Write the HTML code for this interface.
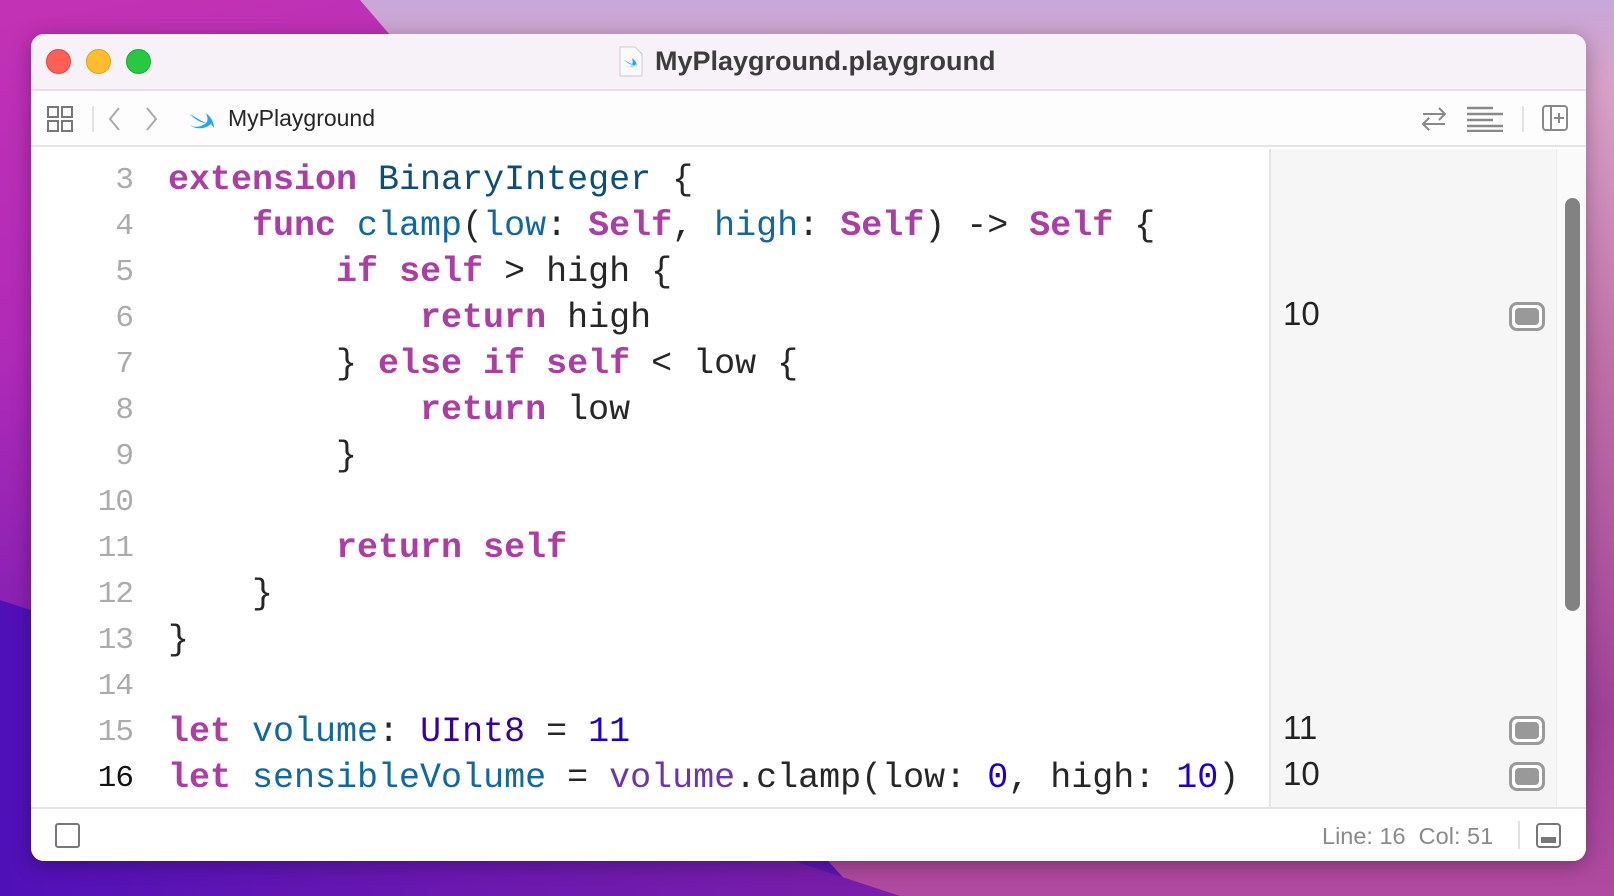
<!DOCTYPE html>
<html><head><meta charset="utf-8"><style>
*{margin:0;padding:0;box-sizing:border-box}
body{width:1614px;height:896px;overflow:hidden;position:relative;font-family:"Liberation Sans",sans-serif;
background:linear-gradient(170deg,#c232b4 0%,#b02ab8 30%,#7a1eb0 60%,#4a10b8 100%);}
.bg2{position:absolute;left:360px;top:0;width:1254px;height:896px;background:linear-gradient(180deg,#c8a8d8 0%,#d8a0c8 10%,#c070a8 40%,#a04098 80%,#b04aa0 100%);clip-path:polygon(0 0,100% 0,100% 100%,500px 100%,440px 830px,30px 35px)}
.bg3{position:absolute;left:0;top:600px;width:900px;height:296px;background:linear-gradient(90deg,#5010b8,#6a18b0 50%,#7a1ea8);clip-path:polygon(0 0,100% 100%,0 100%)}
.win{position:absolute;left:31px;top:34px;width:1555px;height:827px;background:#fff;border-radius:13px;overflow:hidden;box-shadow:0 4px 20px rgba(0,0,0,.3)}
.title{position:absolute;left:0;top:0;width:100%;height:57px;background:#f7f2f7;border-bottom:2px solid #e4e0e4}
.tl{position:absolute;top:15px;width:25px;height:25px;border-radius:50%}
.ttext{position:absolute;left:624px;top:12px;font-weight:bold;font-size:27px;color:#3c3c3c}
.tb{position:absolute;left:0;top:57px;width:100%;height:56px;background:#fdfdfd;border-bottom:2px solid #e4e4e4}
.code{position:absolute;left:0;top:115px;width:1238px;height:692px;background:#fff}
.res{position:absolute;left:1238px;top:115px;width:287px;height:692px;background:#f6f6f6;border-left:2px solid #e6e6e6}
.sb{position:absolute;left:1525px;top:115px;width:30px;height:692px;background:#fafafa;border-left:1px solid #ececec}
.thumb{position:absolute;left:1534px;top:164px;width:15px;height:413px;border-radius:8px;background:#828282}
.ln{position:absolute;left:30px;width:72px;text-align:right;font-family:"Liberation Mono",monospace;font-size:31px;letter-spacing:-1px;color:#ababab}
.cl{position:absolute;left:137px;font-family:"Liberation Mono",monospace;font-size:35px;color:#262626;white-space:pre}
.k{color:#ad3da4;font-weight:bold}.t{color:#0b4f79}.d{color:#0f68a0}.p{color:#3900a0}.u{color:#6c36a9}.n{color:#1c00cf}
.rv{position:absolute;left:1252px;font-size:33px;color:#222}
.ri{position:absolute;left:1478px;width:36px;height:29px;border:3px solid #9a9a9a;border-radius:8px;background:#fff}
.ri:after{content:"";position:absolute;left:3px;top:3px;right:3px;bottom:3px;background:#999;border-radius:4px}
.foot{position:absolute;left:0;top:773px;width:100%;height:54px;background:#fff;border-top:2px solid #e2e2e2}
</style></head><body>
<div class="bg2"></div><div class="bg3"></div>
<div class="win">
 <div class="title">
  <div class="tl" style="left:15px;background:#fe5f57;border:1px solid #e0443e"></div>
  <div class="tl" style="left:55px;background:#febc2e;border:1px solid #dea123"></div>
  <div class="tl" style="left:95px;background:#28c840;border:1px solid #1aab29"></div>
  <svg style="position:absolute;left:587px;top:12px" width="26" height="32" viewBox="0 0 26 32"><path d="M2 1h15l7 7v22H2z" fill="#fafafa" stroke="#ccc"/><path d="M6 14c3 3 7 5 10 5-3 2-6 3-9 1 4 2 9 1 11-2l1 3c0-4-2-7-5-9 1 3 1 5 0 6-3-1-6-3-8-4z" fill="#1fa8f0"/></svg>
  <div class="ttext">MyPlayground.playground</div>
 </div>
 <div class="tb">
  <svg style="position:absolute;left:15px;top:14px" width="28" height="28" viewBox="0 0 28 28" fill="none" stroke="#777" stroke-width="2"><rect x="2" y="2" width="10" height="10"/><rect x="16" y="2" width="10" height="10"/><rect x="2" y="16" width="10" height="10"/><rect x="16" y="16" width="10" height="10"/></svg>
  <div style="position:absolute;left:61px;top:15px;width:2px;height:26px;background:#e2e2e2"></div>
  <svg style="position:absolute;left:76px;top:15px" width="60" height="26" viewBox="0 0 60 26" fill="none" stroke="#aaa" stroke-width="2"><path d="M12 2 3 13l9 11"/><path d="M40 2l9 11-9 11"/></svg>
  <svg style="position:absolute;left:158px;top:14px" width="26" height="26" viewBox="0 0 26 26"><path d="M1 9c4 5 11 9 16 9-5 4-11 5-16 2 6 5 16 4 21-1l3 4c0-6-3-11-8-15 2 5 2 8 0 10-5-2-11-6-16-9z" fill="#1fa8f0"/></svg>
  <div style="position:absolute;left:197px;top:14px;font-size:23px;color:#262626">MyPlayground</div>
  <svg style="position:absolute;left:1388px;top:14px" width="30" height="28" viewBox="0 0 30 28" fill="none" stroke="#888" stroke-width="2"><path d="M4 9h22M20 3l6 6-6 6"/><path d="M26 19H4M10 13l-6 6 6 6"/></svg>
  <svg style="position:absolute;left:1436px;top:15px" width="38" height="26" viewBox="0 0 38 26" stroke="#888" stroke-width="2.4"><path d="M0 2h26M0 8h36M0 14h26M0 20h36M0 25h36"/></svg>
  <div style="position:absolute;left:1491px;top:15px;width:2px;height:26px;background:#e2e2e2"></div>
  <svg style="position:absolute;left:1510px;top:13px" width="28" height="28" viewBox="0 0 28 28" fill="none" stroke="#888" stroke-width="2"><rect x="2" y="2" width="24" height="24" rx="3"/><path d="M10 2v24M18 9v10M13 14h10"/></svg>
 </div>
 <div class="code"></div>
 <div class="res"></div>
 <div class="sb"></div>
 <div class="thumb"></div>

 <div class="ln" style="top:129px">3</div><div class="cl" style="top:126px"><span class="k">extension</span> <span class="t">BinaryInteger</span> {</div>
 <div class="ln" style="top:175px">4</div><div class="cl" style="top:172px">    <span class="k">func</span> <span class="d">clamp</span>(<span class="d">low</span>: <span class="k">Self</span>, <span class="d">high</span>: <span class="k">Self</span>) -&gt; <span class="k">Self</span> {</div>
 <div class="ln" style="top:221px">5</div><div class="cl" style="top:218px">        <span class="k">if</span> <span class="k">self</span> &gt; high {</div>
 <div class="ln" style="top:267px">6</div><div class="cl" style="top:264px">            <span class="k">return</span> high</div>
 <div class="ln" style="top:313px">7</div><div class="cl" style="top:310px">        } <span class="k">else</span> <span class="k">if</span> <span class="k">self</span> &lt; low {</div>
 <div class="ln" style="top:359px">8</div><div class="cl" style="top:356px">            <span class="k">return</span> low</div>
 <div class="ln" style="top:405px">9</div><div class="cl" style="top:402px">        }</div>
 <div class="ln" style="top:451px">10</div>
 <div class="ln" style="top:497px">11</div><div class="cl" style="top:494px">        <span class="k">return</span> <span class="k">self</span></div>
 <div class="ln" style="top:543px">12</div><div class="cl" style="top:540px">    }</div>
 <div class="ln" style="top:589px">13</div><div class="cl" style="top:586px">}</div>
 <div class="ln" style="top:635px">14</div>
 <div class="ln" style="top:681px">15</div><div class="cl" style="top:678px"><span class="k">let</span> <span class="d">volume</span>: <span class="p">UInt8</span> = <span class="n">11</span></div>
 <div class="ln" style="top:727px;color:#111">16</div><div class="cl" style="top:724px"><span class="k">let</span> <span class="d">sensibleVolume</span> = <span class="u">volume</span>.clamp(low: <span class="n">0</span>, high: <span class="n">10</span>)</div>

 <div class="rv" style="top:261px">10</div><div class="ri" style="top:268px"></div>
 <div class="rv" style="top:675px">11</div><div class="ri" style="top:682px"></div>
 <div class="rv" style="top:721px">10</div><div class="ri" style="top:728px"></div>

 <div class="foot">
  <div style="position:absolute;left:24px;top:14px;width:25px;height:25px;border:2px solid #777;border-radius:3px"></div>
  <div style="position:absolute;left:1291px;top:14px;font-size:23.5px;color:#8a8a8a">Line: 16&nbsp; Col: 51</div>
  <div style="position:absolute;left:1487px;top:12px;width:2px;height:28px;background:#e2e2e2"></div>
  <div style="position:absolute;left:1505px;top:14px;width:25px;height:25px;border:2px solid #777;border-radius:4px"><div style="position:absolute;left:3px;right:3px;bottom:3px;height:6px;background:#777"></div></div>
 </div>
</div>
</body></html>
